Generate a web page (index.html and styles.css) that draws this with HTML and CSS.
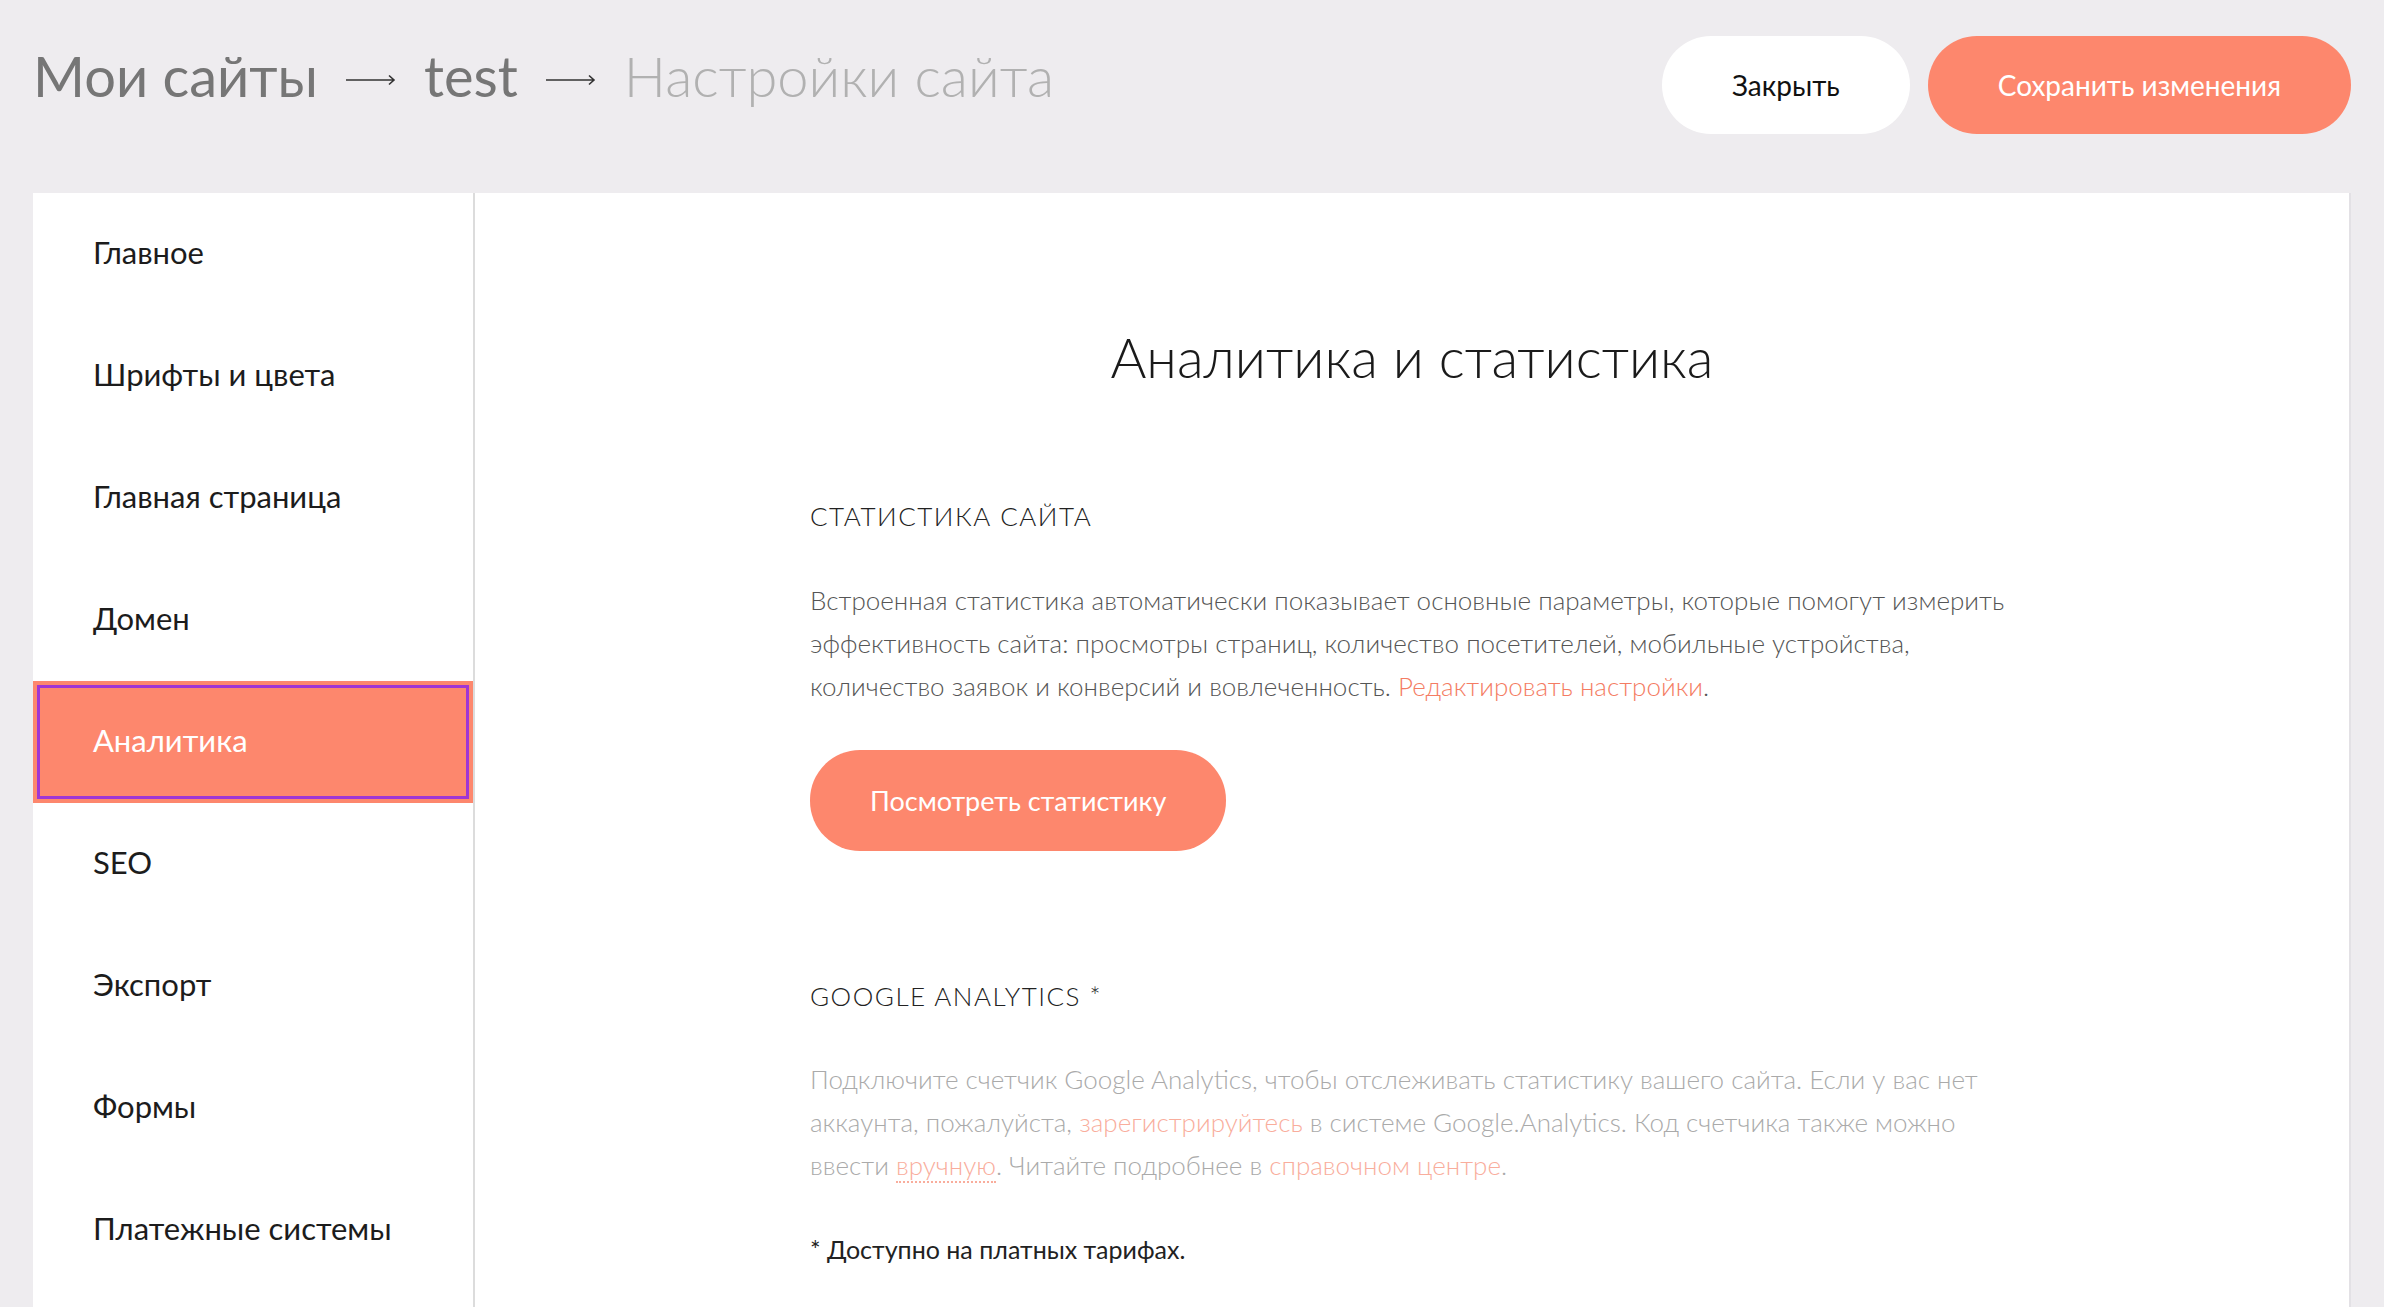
FILE: index.html
```html
<!DOCTYPE html>
<html lang="ru">
  <head>
    <meta charset="UTF-8" />
    <meta name="viewport" content="width=device-width, initial-scale=1.0" />
    <title>Настройки сайта</title>
    <link rel="stylesheet" href="styles.css">
  </head>
  <body>
    <header class="topbar">
      <nav class="crumbs">
        <a class="crumb" href="#">Мои сайты</a>
        <svg class="crumb-arrow" width="50" height="12" viewBox="0 0 50 12">
          <path d="M0 6H48M43 1.5L48 6L43 10.5" fill="none" stroke="#333" stroke-width="1.6" />
        </svg>
        <a class="crumb" href="#">test</a>
        <svg class="crumb-arrow" width="50" height="12" viewBox="0 0 50 12">
          <path d="M0 6H48M43 1.5L48 6L43 10.5" fill="none" stroke="#333" stroke-width="1.6" />
        </svg>
        <span class="crumb crumb-current">Настройки сайта</span>
      </nav>
      <div class="actions">
        <button class="btn btn-light">Закрыть</button>
        <button class="btn btn-accent">Сохранить изменения</button>
      </div>
    </header>

    <main class="panel">
      <aside class="sidebar">
        <a class="nav-item" href="#">Главное</a>
        <a class="nav-item" href="#">Шрифты и цвета</a>
        <a class="nav-item" href="#">Главная страница</a>
        <a class="nav-item" href="#">Домен</a>
        <a class="nav-item active" href="#">Аналитика</a>
        <a class="nav-item" href="#">SEO</a>
        <a class="nav-item" href="#">Экспорт</a>
        <a class="nav-item" href="#">Формы</a>
        <a class="nav-item" href="#">Платежные системы</a>
      </aside>

      <section class="content">
        <div class="content-inner">
          <h1 class="title">Аналитика и статистика</h1>

          <h2 class="section-title">Статистика сайта</h2>
          <p class="text">
            Встроенная статистика автоматически показывает основные параметры, которые помогут измерить<br>
            эффективность сайта: просмотры страниц, количество посетителей, мобильные устройства,<br>
            количество заявок и конверсий и вовлеченность. <a class="link" href="#">Редактировать настройки</a>.
          </p>
          <div class="stat-action">
            <button class="btn btn-accent btn-big">Посмотреть статистику</button>
          </div>

          <h2 class="section-title section-ga">Google Analytics *</h2>
          <p class="text text-muted">
            Подключите счетчик Google Analytics, чтобы отслеживать статистику вашего сайта. Если у вас нет<br>
            аккаунта, пожалуйста, <a class="link" href="#">зарегистрируйтесь</a> в системе Google.Analytics. Код счетчика также можно<br>
            ввести <a class="link link-dotted" href="#">вручную</a>. Читайте подробнее в <a class="link" href="#">справочном центре</a>.
          </p>
          <p class="note">* Доступно на платных тарифах.</p>
        </div>
      </section>
    </main>
  </body>
</html>
```

FILE: styles.css
```css
body {
  margin: 0;
  background-color: #eeecef;
  font-family: "Lato", "Open Sans", sans-serif;
  color: #222;
}
a {
  text-decoration: none;
  color: inherit;
}
.topbar {
  display: flex;
  justify-content: space-between;
  align-items: flex-start;
  height: 193px;
  box-sizing: border-box;
  padding: 36px 33px 0;
}
.crumbs {
  display: flex;
  align-items: flex-start;
  gap: 28px;
  margin-top: 6px;
}
.crumb {
  font-size: 56px;
  line-height: 1.2;
  color: #767676;
}
.crumb-current {
  color: #b1b1b1;
  font-weight: 300;
}
.crumb-arrow {
  margin-top: 32px;
}
.actions {
  display: flex;
  gap: 18px;
}
.btn {
  display: inline-flex;
  align-items: center;
  justify-content: center;
  height: 98px;
  padding: 0 70px;
  border: none;
  border-radius: 50px;
  font-family: inherit;
  font-size: 28px;
  cursor: pointer;
}
.btn-light {
  background-color: #fff;
  color: #111;
}
.btn-accent {
  background-color: #fd876d;
  color: #fff;
}
.panel {
  display: flex;
  margin: 0 33px;
  min-height: 1114px;
  background-color: #fff;
  border-right: 2px solid #e3e1e5;
}
.sidebar {
  width: 440px;
  border-right: 2px solid #dcdcdc;
  display: flex;
  flex-direction: column;
}
.nav-item {
  display: flex;
  align-items: center;
  height: 122px;
  box-sizing: border-box;
  padding: 0 0 4px 60px;
  font-size: 31px;
  color: #1c1c1c;
}
.nav-item.active {
  background-color: #fd876d;
  color: #fff;
  outline: 3px solid #9f36d4;
  outline-offset: -7px;
}
.content {
  flex: 1;
}
.content-inner {
  width: 1204px;
  margin: 0 auto;
  padding-top: 128px;
}
.title {
  margin: 0;
  text-align: center;
  font-size: 55px;
  font-weight: 300;
  line-height: 72px;
  color: #1a1a1a;
}
.section-title {
  margin: 108px 0 0;
  font-size: 26px;
  font-weight: 300;
  line-height: 31px;
  letter-spacing: 1.5px;
  text-transform: uppercase;
  color: #222;
}
.section-ga {
  margin-top: 130px;
}
.text {
  margin: 47px 0 0;
  font-size: 26px;
  font-weight: 300;
  line-height: 43px;
  color: #555;
}
.link {
  color: #f47c63;
}
.text-muted {
  margin-top: 46px;
  color: #aaa;
}
.text-muted .link {
  color: #f9ad9c;
}
.link-dotted {
  border-bottom: 2px dotted #f9ad9c;
}
.stat-action {
  margin-top: 42px;
}
.btn-big {
  height: 101px;
  padding: 0 60px;
  font-size: 27px;
}
.note {
  margin: 47px 0 0;
  font-size: 25px;
  line-height: 30px;
  color: #222;
}
```
